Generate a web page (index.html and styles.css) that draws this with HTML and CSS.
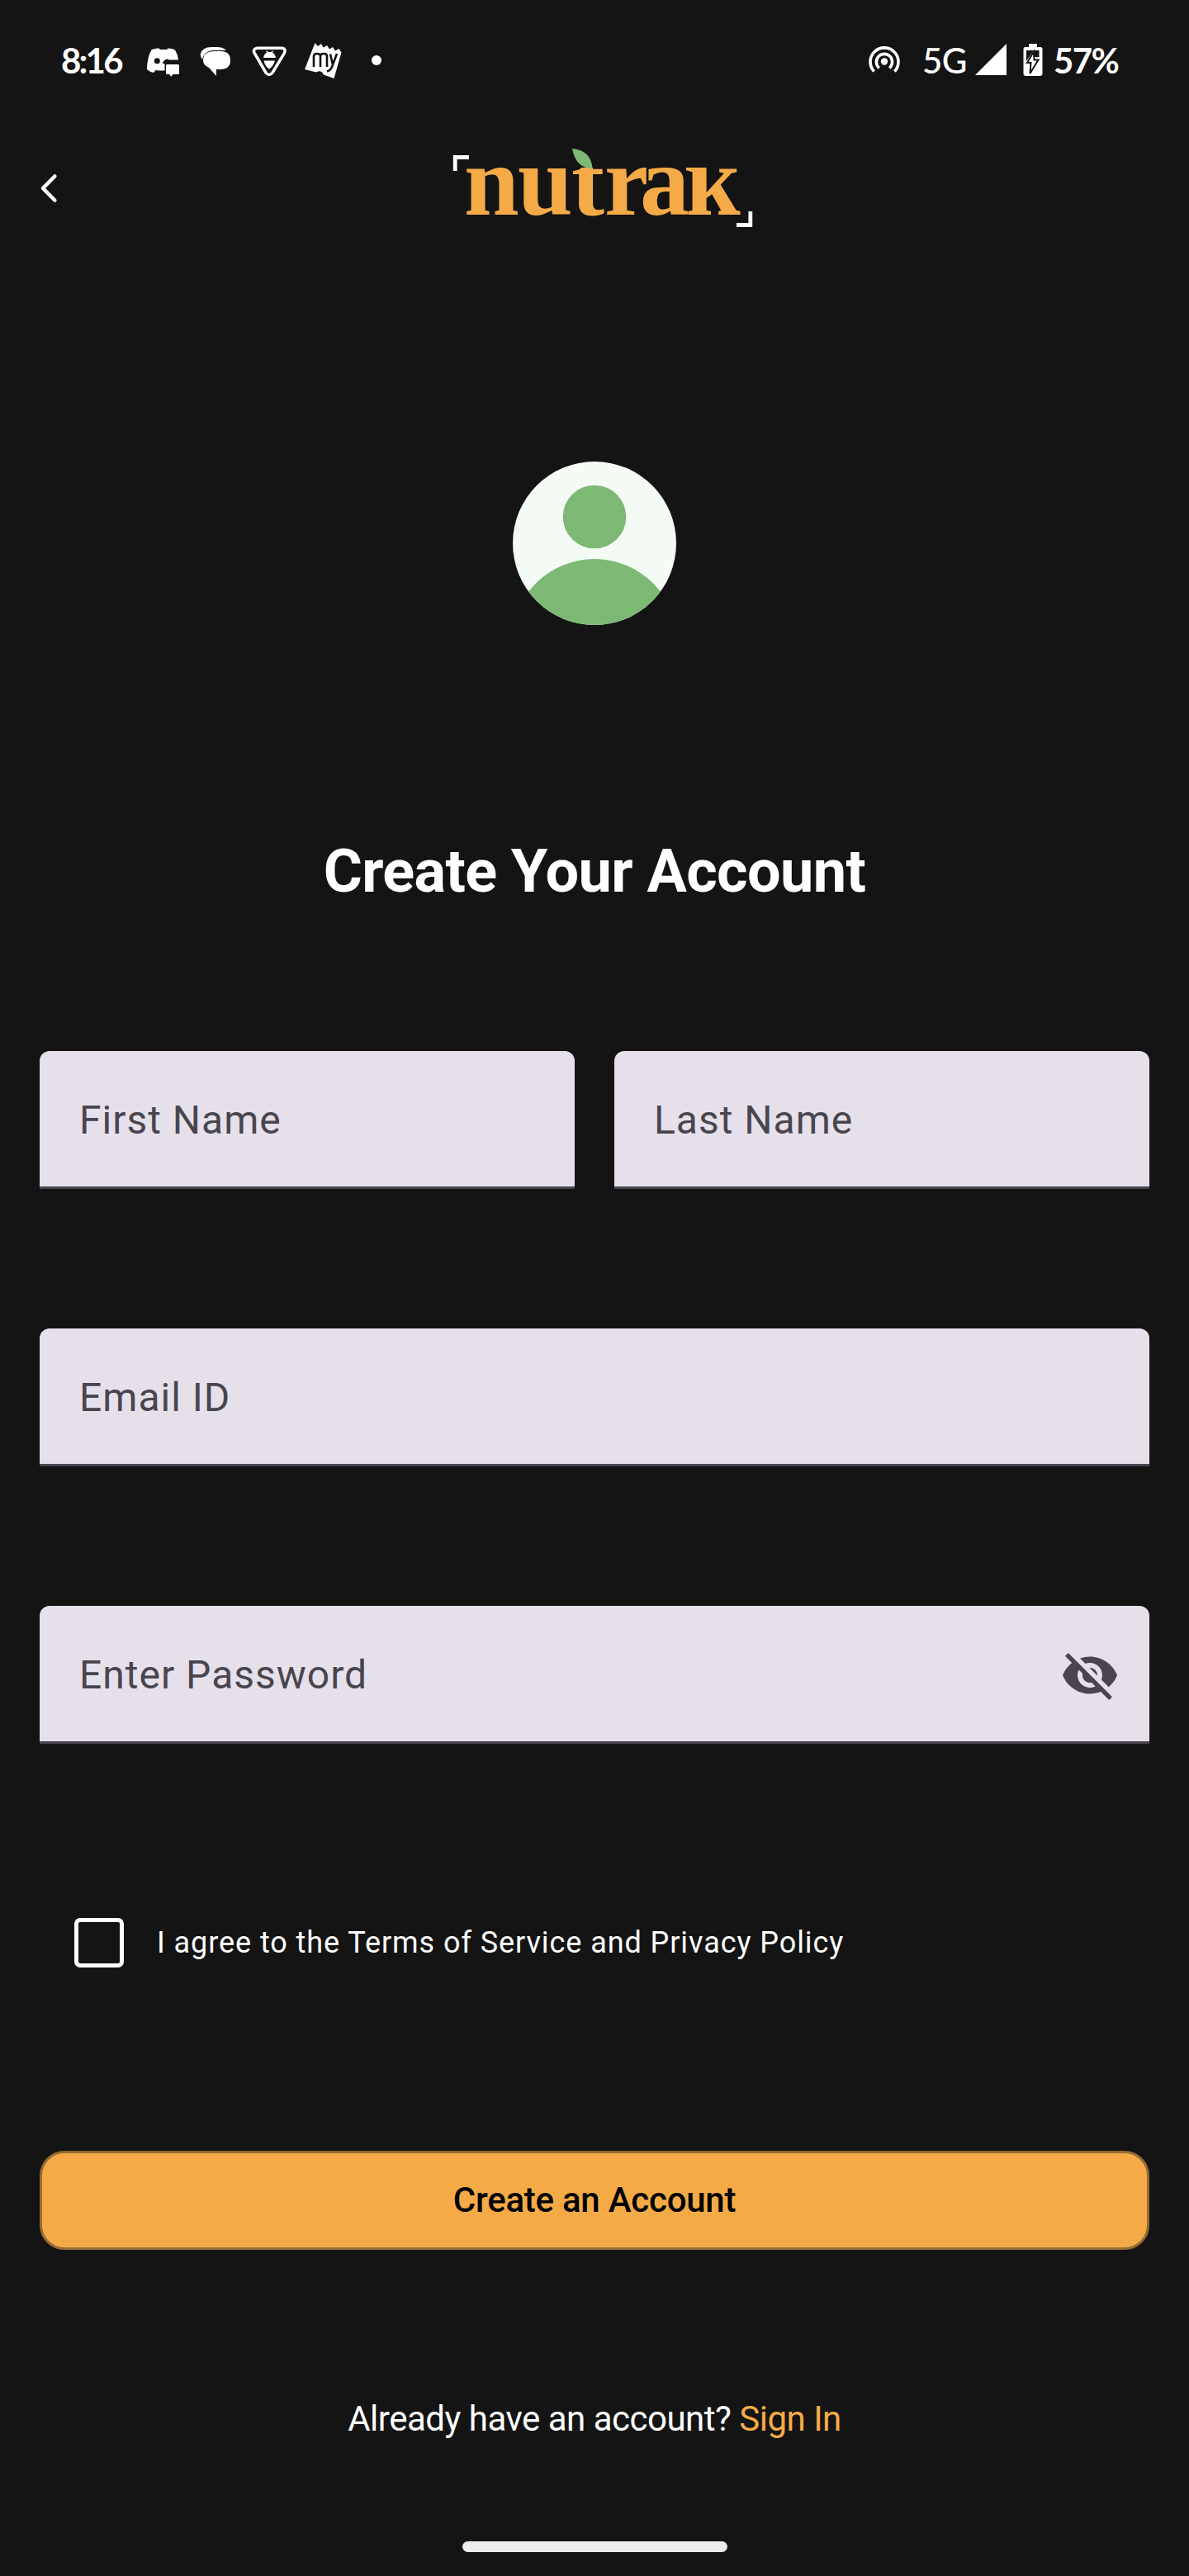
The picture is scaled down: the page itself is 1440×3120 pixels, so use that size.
FILE: index.html
```html
<!DOCTYPE html>
<html lang="en">
<head>
<meta charset="utf-8">
<title>nutrak – Create Your Account</title>
<link rel="stylesheet" href="styles.css">
</head>
<body>
<div class="screen">
  <div class="status-bar">
    <div class="status-left">
      <span class="time">8:16</span>
      <svg class="status-icons" width="300" height="48" viewBox="170 50 300 48" fill="#fff">
        <path d="M184 60q5-2 8.500-1.500l1.500 1.500h8l1.500-1.500q5 0 8.500 2 3.500 6 4 12h-16.500v13h-6l-5-.5-2.500 3q-5-1-8-4 0-15 6-24.500z"/>
        <circle cx="190.300" cy="73.700" r="3.500" fill="#141414"/>
        <path d="M198 77q2-4 6-4" fill="none" stroke="#141414" stroke-width="3"/>
        <path d="M202.500 78h13q1.500 0 1.500 1.500v9q0 1.500-1.500 1.500h-6l-2.500 3-1.500-3h-3q-1.500 0-1.500-1.500v-9q0-1.500 1.500-1.500z"/>
        <path d="M257 57h6q7 0 11 4h-16q-11 1-13 11-3-4-2-7 2-8 14-8z"/>
        <path d="M260 62h7q12 0 12 11 0 11-12 11h-5v8l-9-10q-7-3-7-9 0-11 14-11z"/>
        <path d="M311.500 58.200h30.500q4.500 1 2.500 6L330 88q-4 5-8 0l-14-24q-2-5 3.500-5.800z" fill="none" stroke="#fff" stroke-width="3.500" stroke-linejoin="round"/>
        <path d="M319 70q1-5 4-6l-1-3 3 2h3l3-2-1 3q3 1 4 6zM319.500 73.500h13.500q-2 7-7 10-5-3-6.500-10z"/>
        <path d="M381.500 52l3.500 4 4-3 2.500 4.500 4.500-2.500 3 4.500 4-2.500 3 4.500 4.500-2.500 3 4.500-9 31.500-12.500-4.500q-3-6-8-3.500l-1 .5-14-3.500 3.500-9z"/>
        <path d="M380 81V68q0-3 4-3t4 3v13m0-13q0-3 4-3t4 3v13m4-15.500 3 13 5-13.500m-5 13.500q-2 7-7 8" fill="none" stroke="#141414" stroke-width="2.600"/>
        <circle cx="456" cy="73" r="6"/>
      </svg>
    </div>
    <div class="status-right">
      <svg width="40" height="40" viewBox="1050 54 40 40" fill="none" stroke="#fff" stroke-width="3.600">
        <circle cx="1070" cy="74.500" r="4.200" fill="#fff" stroke="none"/>
        <path d="M1063.800 82.300a9.600 9.600 0 1 1 12.400 0"/>
        <path d="M1057.600 86.500a17 17 0 1 1 24.800 0"/>
      </svg>
      <span class="network">5G</span>
      <svg class="signal" width="38" height="38" viewBox="0 0 38 38"><path d="M38 0V38H0z" fill="#fff"/></svg>
      <svg class="battery" width="24" height="40" viewBox="0 0 24 40">
        <path d="M7 0h10v4h4q2.500 0 2.500 2.500V36q0 3-3 3h-17q-3 0-3-3V6.500Q.5 4 3 4h4z" fill="#fff"/>
        <path d="M4 8h9L4 21zM14 8h5.500v8H14z" fill="#141414"/>
        <path d="M13 9.500 5 23h4.500l-1 13L18.500 19.500h-5z" fill="#fff" stroke="#141414" stroke-width="2"/>
      </svg>
      <span class="percent">57%</span>
    </div>
  </div>

  <header class="app-bar">
    <svg class="back" width="28" height="40" viewBox="45 208 28 40"><path d="M66.300 213.500 52 228l14.300 14.500" fill="none" stroke="#fff" stroke-width="4.600" stroke-linecap="round" stroke-linejoin="round"/></svg>
    <svg class="logo" width="370" height="104" viewBox="545 176 370 104">
      <text class="wordmark" x="562 627 692 732 775 830" y="260">nutrak</text>
      <!-- the wordmark's k has no ascender -->
      <path d="M670 172h245v31H670z" fill="#141414"/>
      <path d="M831 203h16v5h-11q0-1-5-1.500z" fill="#f4ab47"/>
      <path d="M568 190.500H551.200V207M892 272.500h16.800V256" fill="none" stroke="#fff" stroke-width="4.800"/>
      <path d="M693 180q23 2 24.500 24-20 0-24.500-24z" fill="#7db874"/>
    </svg>
  </header>

  <main class="content">
    <svg class="avatar" width="198" height="198" viewBox="621 559 198 198">
      <defs><clipPath id="disc"><circle cx="720" cy="658" r="99"/></clipPath></defs>
      <g clip-path="url(#disc)">
        <rect x="621" y="559" width="198" height="198" fill="#f4fbf5"/>
        <g fill="#7db874"><circle cx="720" cy="626" r="38.300"/><circle cx="720" cy="777.500" r="100.500"/></g>
      </g>
    </svg>
    <h1 class="title">Create Your Account</h1>
    <form class="form">
      <div class="row">
        <div class="field">First Name</div>
        <div class="field">Last Name</div>
      </div>
      <div class="field">Email ID</div>
      <div class="field">Enter Password
        <svg width="72" height="72" viewBox="0 0 24 24" fill="#49454f"><path d="M12 7c2.760 0 5 2.240 5 5 0 .65-.13 1.260-.36 1.830l2.920 2.920c1.510-1.260 2.700-2.890 3.430-4.750-1.730-4.390-6-7.500-11-7.500-1.400 0-2.740.25-3.980.7l2.160 2.160C10.740 7.130 11.350 7 12 7zM2 4.270l2.280 2.280.46.46C3.080 8.300 1.780 10.020 1 12c1.730 4.390 6 7.500 11 7.500 1.550 0 3.030-.3 4.380-.84l.42.42L19.730 22 21 20.730 3.270 3 2 4.270zM7.530 9.800l1.550 1.550c-.05.21-.08.43-.08.65 0 1.660 1.340 3 3 3 .22 0 .44-.03.65-.08l1.550 1.550c-.67.33-1.410.53-2.200.53-2.760 0-5-2.240-5-5 0-.79.2-1.530.53-2.200zm4.310-.78l3.150 3.150.02-.16c0-1.660-1.340-3-3-3l-.17.01z"/></svg>
      </div>
      <div class="agree"><span class="checkbox"></span><span>I agree to the Terms of Service and Privacy Policy</span></div>
      <div class="button">Create an Account</div>
    </form>
    <p class="signin">Already have an account? <span class="link">Sign In</span></p>
  </main>
  <div class="home-bar"></div>
</div>
</body>
</html>
```
FILE: styles.css
```css
* { box-sizing: border-box; }

body {
  margin: 0;
  background: #141414;
  color: #fff;
  font-family: Roboto, sans-serif;
}

svg { display: block; flex: none; }

.screen {
  width: 1440px;
  height: 3120px;
  display: flex;
  flex-direction: column;
  align-items: center;
  overflow: hidden;
}

.status-bar {
  width: 100%;
  height: 148px;
  padding: 0 85px 0 74px;
  display: flex;
  justify-content: space-between;
  align-items: center;
  font: 700 42px/48px Lato, sans-serif;
  white-space: nowrap;
}

.status-left,
.status-right { display: flex; align-items: center; }
.time { width: 96px; margin-top: -2px; letter-spacing: -2.8px; }
.network { width: 54px; margin: -2px 0 0 26px; font-weight: 500; letter-spacing: -0.5px; }
.signal { margin: -4px 0 0 10px; }
.battery { margin: -3px 0 0 20px; }
.percent { width: 79px; margin: -2px 0 0 13px; letter-spacing: -1.6px; }

.app-bar {
  width: 100%;
  height: 160px;
  padding-left: 45px;
  display: flex;
  align-items: center;
}

.logo { margin-left: 472px; }

.wordmark {
  font: bold 120px "Liberation Serif", serif;
  fill: #f4ab47;
}

.content {
  width: 1344px;
  display: flex;
  flex-direction: column;
  align-items: center;
}

.avatar { margin-top: 251px; }

.title {
  margin: 257px 0 0;
  font-size: 72px;
  line-height: 84px;
  font-weight: 700;
  letter-spacing: -0.6px;
  white-space: nowrap;
}

.form {
  width: 100%;
  margin-top: 175px;
  display: flex;
  flex-direction: column;
  gap: 169px;
}

.row { display: grid; grid-template-columns: 1fr 1fr; gap: 48px; }

.field {
  height: 167px;
  padding: 3px 36px 0 48px;
  display: flex;
  align-items: center;
  justify-content: space-between;
  background: #e6e0ea;
  border-bottom: 3px solid #49454f;
  border-radius: 12px 12px 0 0;
  color: #49454f;
  font-size: 48px;
  letter-spacing: 1px;
}

.agree {
  margin-top: 42px;
  height: 60px;
  padding-left: 42px;
  display: flex;
  align-items: center;
  gap: 40px;
  font-size: 36px;
  letter-spacing: 0.93px;
  white-space: nowrap;
}

.checkbox {
  width: 60px;
  height: 60px;
  border: 5px solid #fff;
  border-radius: 7px;
}

.button {
  height: 120px;
  margin-top: 53px;
  padding-bottom: 2px;
  display: flex;
  align-items: center;
  justify-content: center;
  background: #f4ab47;
  border: 3px solid #936b33;
  border-radius: 30px;
  color: #000;
  font-size: 42px;
  font-weight: 500;
  letter-spacing: -0.25px;
}

.signin {
  margin: 180px 0 0;
  font-size: 42px;
  line-height: 50px;
  letter-spacing: -0.5px;
  white-space: nowrap;
}

.link { color: #f4ab47; }

.home-bar {
  width: 321px;
  height: 13px;
  margin-top: 123px;
  border-radius: 7px;
  background: #ececec;
}
```
